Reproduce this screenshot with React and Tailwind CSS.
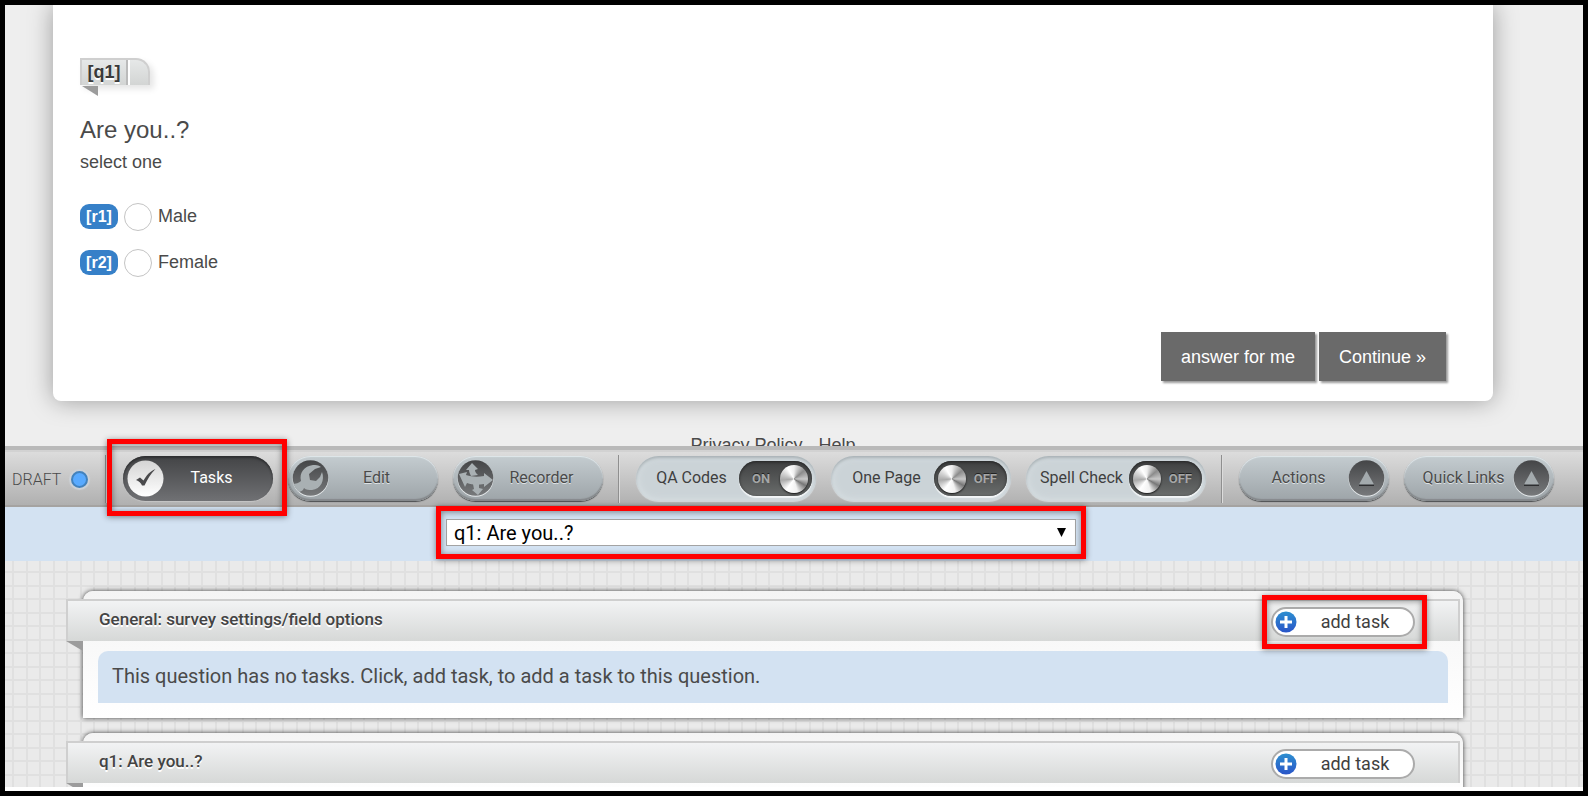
import { useState } from "react";

function Highlight({ className }) {
  return (
    <span
      aria-hidden="true"
      className={`pointer-events-none absolute z-10 border-[5px] border-[#ff0000] shadow-[0_1px_6px_rgba(0,0,0,0.45),inset_0_1px_6px_rgba(0,0,0,0.45)] ${className}`}
    />
  );
}

function Divider() {
  return <span className="mr-px h-12 w-[2px] shrink-0 border-r border-[#dcdcdc] bg-[#8f8f8f]" />;
}

function CheckIcon() {
  return (
    <svg viewBox="0 0 37 37" className="size-[37px] shrink-0" aria-hidden="true">
      <defs>
        <linearGradient id="checkDisc" x1="0" y1="0" x2="0" y2="1">
          <stop offset="0" stopColor="#d4d4d4" />
          <stop offset="1" stopColor="#ffffff" />
        </linearGradient>
      </defs>
      <circle cx="18.5" cy="18.5" r="18" fill="url(#checkDisc)" />
      <path d="M9 20l4-2.500 3.500 3c3-5 6-9 12-11.500-5 5-8 10-11 16.500h-2.500c-1-2.500-3-4.500-6-5.500z" fill="#4a4a4c" />
    </svg>
  );
}

function DarkDisc({ id, children }) {
  return (
    <svg viewBox="0 0 37 37" className="size-[37px] shrink-0" aria-hidden="true">
      <defs>
        <linearGradient id={id} x1="0" y1="0" x2="0" y2="1">
          <stop offset="0" stopColor="#444547" />
          <stop offset="1" stopColor="#77797b" />
        </linearGradient>
        <clipPath id={`${id}Clip`}>
          <circle cx="18.5" cy="18" r="18" />
        </clipPath>
      </defs>
      <circle cx="18.5" cy="18.8" r="18" fill="#e6eaec" />
      <circle cx="18.5" cy="18" r="17.8" fill={`url(#${id})`} />
      <g clipPath={`url(#${id}Clip)`}>{children}</g>
    </svg>
  );
}

function WrenchIcon() {
  return (
    <DarkDisc id="wrench">
      <path
        d="M0 24c4 0 7-1 9-3-2-8 3-15 12-16 3 0 5 0 8 2l-6 2-6 5 1 6 6 1 4-4 2-5c3 8-1 17-10 18-3 0-6 0-8-2-1 3-4 4-9 5z"
        fill="#a9b0b3"
      />
    </DarkDisc>
  );
}

function ArrowsIcon() {
  return (
    <DarkDisc id="arrows">
      <g fill="#a9b0b3">
        <path d="M15 3l6 6-3 1c0 2 1 3 3 5l-7 1c-1-2-2-4-2-6l-3 0z" />
        <path d="M2 14l8-2-1 3c6 2 12 2 18 1l0-3 9 7-9 7v-3c-6 1-12 1-17-1l-2 4z" />
        <path d="M16 24l6 0 0 4 4 1-5 6-6-5 2-1z" />
      </g>
    </DarkDisc>
  );
}

function UpIcon({ id }) {
  return (
    <DarkDisc id={id}>
      <path d="M11 25h15" stroke="#2d2e30" strokeWidth="2" />
      <path d="M18.500 11l7.500 13.500h-15z" fill="#a3aaad" />
    </DarkDisc>
  );
}

const raised =
  "bg-linear-to-b from-[#c4ccd0] to-[#9da4a8] text-[#4a4a4a] [text-shadow:0_1px_0_#dfe4e6] shadow-[0_1px_1px_#4b4d4f,inset_0_1px_1px_#e2e9ec,inset_0_-2px_1px_#85898c]";
const pressed =
  "bg-linear-to-b from-[#434446] to-[#707174] text-white shadow-[0_1px_1px_#c5c5c5,inset_0_2px_2px_#2f3032]";

function PillButton({ icon, iconRight, label, active, onClick }) {
  return (
    <button
      type="button"
      onClick={onClick}
      className={`flex h-[45px] w-[150px] shrink-0 items-center rounded-full text-base ${iconRight ? "pr-1 pl-[10px]" : "pr-[14px] pl-1"} ${active ? pressed : raised}`}
    >
      {!iconRight && icon}
      <span className="flex-1 pb-[2px] text-center whitespace-nowrap">{label}</span>
      {iconRight && icon}
    </button>
  );
}

function Toggle({ label, defaultOn }) {
  const [on, setOn] = useState(defaultOn);
  return (
    <label className="flex h-[45px] w-[180px] shrink-0 items-center rounded-full bg-[#cbd3d7] pr-1 pl-2 text-base text-[#3f3f3f] shadow-[inset_0_2px_3px_#a9b1b5,inset_0_0_8px_#dde4e7,0_1px_1px_#d7dcde]">
      <span className="flex-1 pb-[2px] text-center whitespace-nowrap">{label}</span>
      <span className="relative h-[35px] w-[73px] shrink-0">
        <input
          type="checkbox"
          checked={on}
          onChange={() => setOn(!on)}
          className="block h-[35px] w-[73px] appearance-none rounded-full bg-linear-to-b from-[#3f4041] to-[#6a6d6c] shadow-[0_2px_1px_#f3f6f7,inset_0_1px_3px_#222]"
        />
        <span
          className={`pointer-events-none absolute top-[4px] size-[28px] rounded-full bg-[conic-gradient(#eee,#8b8b8b_50deg,#c8c8c8_90deg,#777_120deg,#f2f2f2_165deg,#fff_215deg,#aaa_265deg,#d5d5d5_300deg,#fff_330deg,#eee)] shadow-[0_1px_2px_#111] ${on ? "right-[4px]" : "left-[4px]"}`}
        />
        <span
          className={`pointer-events-none absolute top-[10px] text-[13px] leading-4 font-bold text-[#a5a7a7] [text-shadow:0_-1px_0_#222] ${on ? "left-[13px]" : "right-[10px]"}`}
        >
          {on ? "ON" : "OFF"}
        </span>
      </span>
    </label>
  );
}

function Choice({ code, label }) {
  return (
    <label className="flex h-[46px] items-center text-lg leading-6">
      <span className="mr-[6px] flex h-[25px] w-[38px] items-center justify-center rounded-[9px] bg-[#3680c8] pt-[2px] text-base font-bold text-white">
        [{code}]
      </span>
      <input
        type="radio"
        name="q1"
        className="mt-[2px] mr-[6px] size-[28px] appearance-none rounded-full border border-[#c4c4c4] bg-white checked:bg-[#3680c8]"
      />
      {label}
    </label>
  );
}

function TaskPanel({ title, highlighted, children }) {
  return (
    <section className="rounded-t-[10px] bg-linear-to-b from-[#f4f4f4] to-white pt-2 pb-[15px] shadow-[0_0_5px_rgba(0,0,0,0.75)]">
      <header className="relative mr-[3px] -ml-[17px] flex h-[42px] items-center justify-between border-2 border-b-0 border-[#cfcfcf] bg-linear-to-b from-[#f2f3f4] to-[#d6d8d7] pt-[2px] pr-[43px] pl-[31px]">
        <h2 className="pb-1 text-[17px] font-medium text-[#444] [text-shadow:0_2px_0_#fff]">{title}</h2>
        <div className="relative">
          <button
            type="button"
            className="flex h-[30px] w-[144px] items-center rounded-full border-2 border-[#ababab] bg-white pl-[2px] text-[18px] text-[#3f3f3f]"
          >
            <svg viewBox="0 0 22 22" className="size-[22px]" aria-hidden="true">
              <defs>
                <linearGradient id="plusDisc" x1="0" y1="0" x2="0" y2="1">
                  <stop offset="0" stopColor="#2d8fd0" />
                  <stop offset="1" stopColor="#2a55c8" />
                </linearGradient>
              </defs>
              <circle cx="11" cy="11" r="10.500" fill="url(#plusDisc)" />
              <path d="M11 5v12M5 11h12" stroke="#fff" strokeWidth="3" />
            </svg>
            <span className="flex-1 pb-[2px] text-center">add task</span>
          </button>
          {highlighted && <Highlight className="-inset-y-[12px] -right-[12px] -left-[9px]" />}
        </div>
        <span className="absolute top-full -left-[2px] h-[10px] w-[17px] bg-[#9c9c9c] [clip-path:polygon(0_0,100%_0,100%_100%)]" />
      </header>
      {children}
    </section>
  );
}

export default function App() {
  return (
    <div className="flex h-screen flex-col overflow-hidden border-[5px] border-black bg-white pb-1 font-['Liberation_Sans',Arial,sans-serif] text-[#4a4a4a]">
      <main className="min-h-0 flex-1 overflow-hidden bg-[#eeeeee]">
        <div className="mr-[90px] ml-12 rounded-b-lg bg-white pt-[53px] pr-[47px] pb-5 pl-[27px] shadow-[0_0_24px_rgba(0,0,0,0.35)]">
          <div className="relative flex h-[27px] w-[70px] rounded-tr-[14px] border-2 border-b-0 border-[#cfcfcf] bg-linear-to-b from-[#e6e8e8] to-[#d3d5d4] shadow-[4px_4px_6px_rgba(0,0,0,0.1)]">
            <span className="w-[46px] border-r-2 border-[#bbb] text-center text-lg leading-6 font-bold text-[#3a3a3a] [text-shadow:0_2px_0_#fff]">
              [q1]
            </span>
            <span className="w-[2px] bg-white" />
            <span className="absolute top-[26px] left-0 h-[10px] w-4 bg-[#9c9c9c] [clip-path:polygon(0_0,100%_0,100%_100%)]" />
          </div>
          <h1 className="mt-[29px] text-2xl leading-8">Are you..?</h1>
          <p className="mt-1 text-lg leading-6">select one</p>
          <div className="mt-[19px] flex flex-col items-start">
            <Choice code="r1" label="Male" />
            <Choice code="r2" label="Female" />
          </div>
          <div className="mt-[47px] flex justify-end gap-1">
            <button
              type="button"
              className="h-[49px] bg-[#6a6a6a] px-5 text-lg text-white shadow-[2px_2px_2px_rgba(0,0,0,0.4)]"
            >
              answer for me
            </button>
            <button
              type="button"
              className="h-[49px] bg-[#6a6a6a] px-5 text-lg text-white shadow-[2px_2px_2px_rgba(0,0,0,0.4)]"
            >
              Continue »
            </button>
          </div>
        </div>
        <footer className="mr-[90px] ml-12 flex justify-center gap-4 pt-8 text-lg leading-6">
          <a href="#privacy">Privacy Policy</a>
          <a href="#help">Help</a>
        </footer>
      </main>

      <div className="flex h-[341px] shrink-0 flex-col font-[Roboto,'Open_Sans',sans-serif]">
        <nav className="flex h-[61px] shrink-0 items-center gap-[15px] border-t-4 border-b-2 border-t-[#b9b9b9] border-b-[#a5a3a1] bg-linear-to-b from-[#dedede] to-[#b0b0b0] pt-[2px] pl-[7px] shadow-[inset_0_2px_0_#d2d2d2]">
          <div className="flex w-[78px] shrink-0 items-center justify-between pt-[2px] pr-[2px] text-base font-light">
            DRAFT
            <span className="size-[17px] rounded-full border-2 border-[#4382bd] bg-[#59aaff] shadow-[0_0_1px_2px_#cdd2d8]" />
          </div>
          <Divider />
          <div className="relative">
            <PillButton icon={<CheckIcon />} label="Tasks" active />
            <Highlight className="-top-[17px] -right-[14px] -bottom-[15px] -left-4" />
          </div>
          <PillButton icon={<WrenchIcon />} label="Edit" />
          <PillButton icon={<ArrowsIcon />} label="Recorder" />
          <Divider />
          <Toggle label="QA Codes" defaultOn />
          <Toggle label="One Page" defaultOn={false} />
          <Toggle label="Spell Check" defaultOn={false} />
          <Divider />
          <PillButton icon={<UpIcon id="actions" />} iconRight label="Actions" />
          <PillButton icon={<UpIcon id="links" />} iconRight label="Quick Links" />
        </nav>

        <div className="flex h-[54px] shrink-0 items-start justify-center bg-[#d3e2f2] pt-3 pr-[66px]">
          <div className="relative w-[630px]">
            <select
              aria-label="Question"
              className="block h-[27px] w-full appearance-none border border-[#a3a3a3] bg-white pl-[7px] text-xl leading-6 text-black"
            >
              <option>q1: Are you..?</option>
            </select>
            <span className="pointer-events-none absolute top-[9px] right-[10px] h-[9px] w-[9px] bg-black [clip-path:polygon(0_0,100%_0,50%_100%)]" />
            <Highlight className="-inset-x-[10px] -top-[13px] -bottom-[13px]" />
          </div>
        </div>

        <div className="flex min-h-0 flex-1 flex-col gap-[15px] overflow-hidden bg-[#eaeaea] bg-[linear-gradient(90deg,transparent_7px,#e0e0e0_7px,#e0e0e0_9px,transparent_9px,transparent_21px,#e0e0e0_21px,#e0e0e0_23px,transparent_23px),linear-gradient(transparent_10px,#e0e0e0_10px,#e0e0e0_12px,transparent_12px,transparent_24px,#e0e0e0_24px,#e0e0e0_26px,transparent_26px)] bg-[size:27px_27px] pt-[30px] pr-[120px] pl-[78px]">
          <TaskPanel title="General: survey settings/field options" highlighted>
            <p className="mx-[15px] mt-[10px] rounded-t-[10px] bg-[#d3e2f2] px-[14px] pt-[11px] pb-[13px] text-xl leading-7">
              This question has no tasks. Click, add task, to add a task to this question.
            </p>
          </TaskPanel>
          <TaskPanel title="q1: Are you..?" />
        </div>
      </div>
    </div>
  );
}
